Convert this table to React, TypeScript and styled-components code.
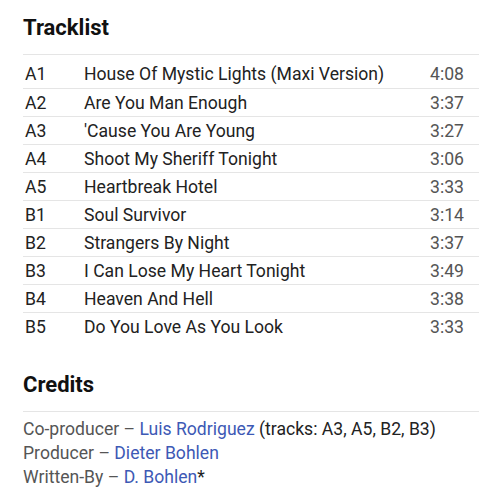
import React from 'react';
import styled, { createGlobalStyle } from 'styled-components';

const Global = createGlobalStyle`
  body {
    margin: 0;
    background: #fff;
    font-family: Roboto, "Liberation Sans", sans-serif;
    color: #222;
  }
`;

const Page = styled.div`
  padding: 10px 21px 0 23px;
`;

const Heading = styled.h2`
  margin: 0;
  font-size: 22px;
  font-weight: 700;
  line-height: 36px;
  color: #111;
`;

const Table = styled.table`
  width: 100%;
  border-collapse: collapse;
  margin-top: 8px;
  border-top: 1px solid #e5e5e5;
  font-size: 17.6px;
`;

const Spacer = styled.tr`
  height: 6px;
`;

const Row = styled.tr<{ last?: boolean }>`
  height: 28px;
  border-bottom: ${(p) => (p.last ? 'none' : '1px solid #e5e5e5')};
`;

const Pos = styled.td`
  width: 59px;
  padding: 0 0 0 2px;
  color: #222;
`;

const Title = styled.td`
  color: #222;
  padding: 0;
`;

const Duration = styled.td`
  text-align: right;
  padding: 0 15px 0 0;
  color: #555;
`;

const CreditsHeading = styled(Heading)`
  margin-top: 26px;
`;

const CreditList = styled.div`
  margin-top: 8px;
  border-top: 1px solid #e5e5e5;
  padding-top: 5px;
  font-size: 17.6px;
  line-height: 24px;
  color: #555;
`;

const Credit = styled.div``;

const Link = styled.a`
  color: #3d59b5;
  text-decoration: none;
`;

const Note = styled.span`
  color: #222;
`;

const tracks = [
  ['A1', 'House Of Mystic Lights (Maxi Version)', '4:08'],
  ['A2', 'Are You Man Enough', '3:37'],
  ['A3', "'Cause You Are Young", '3:27'],
  ['A4', 'Shoot My Sheriff Tonight', '3:06'],
  ['A5', 'Heartbreak Hotel', '3:33'],
  ['B1', 'Soul Survivor', '3:14'],
  ['B2', 'Strangers By Night', '3:37'],
  ['B3', 'I Can Lose My Heart Tonight', '3:49'],
  ['B4', 'Heaven And Hell', '3:38'],
  ['B5', 'Do You Love As You Look', '3:33'],
];

export default function App() {
  return (
    <Page>
      <Global />
      <Heading>Tracklist</Heading>
      <Table>
        <tbody>
          <Spacer />
          {tracks.map(([pos, title, dur], i) => (
            <Row key={pos} last={i === tracks.length - 1}>
              <Pos>{pos}</Pos>
              <Title>{title}</Title>
              <Duration>{dur}</Duration>
            </Row>
          ))}
        </tbody>
      </Table>
      <CreditsHeading>Credits</CreditsHeading>
      <CreditList>
        <Credit>
          Co-producer – <Link>Luis Rodriguez</Link> <Note>(tracks: A3, A5, B2, B3)</Note>
        </Credit>
        <Credit>
          Producer – <Link>Dieter Bohlen</Link>
        </Credit>
        <Credit>
          Written-By – <Link>D. Bohlen</Link>
          <Note>*</Note>
        </Credit>
      </CreditList>
    </Page>
  );
}
